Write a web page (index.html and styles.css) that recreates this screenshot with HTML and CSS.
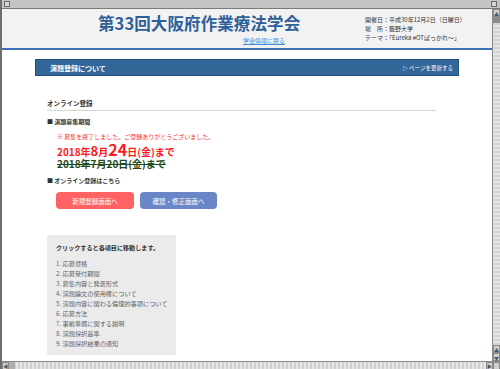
FILE: index.html
```html
<!DOCTYPE html>
<html lang="ja">

<head>
    <meta charset="UTF-8">
    <title>演題登録について</title>
    <link rel="stylesheet" href="styles.css">
</head>

<body>
    <div class="window">
        <div class="titlebar">
            <span class="win-box"></span>
            <span class="win-box"></span>
        </div>
        <div class="middle">
            <div class="viewport">
                <header class="site-header">
                    <div class="brand">
                        <h1>第33回大阪府作業療法学会</h1>
                        <a href="#" class="back-link">学会情報に戻る</a>
                    </div>
                    <div class="info">
                        <p>開催日：平成30年12月2日（日曜日）</p>
                        <p>場　所：藍野大学</p>
                        <p>テーマ：「Eureka #OTぱっかれ～」</p>
                    </div>
                </header>

                <div class="container">
                    <div class="section-bar">
                        <span class="bar-title">演題登録について</span>
                        <span class="bar-link">▷ ページを更新する</span>
                    </div>

                    <div class="content">
                        <h3 class="sub-title">オンライン登録</h3>

                        <p class="item-head">■ 演題募集期間</p>
                        <p class="notice">※ 募集を終了しました。ご登録ありがとうございました。</p>
                        <p class="deadline">2018年<span class="big">8</span>月<span class="bigger">24</span>日(金)まで</p>
                        <p class="old-deadline">2018年7月20日(金)まで</p>

                        <p class="item-head item-head-2">■ オンライン登録はこちら</p>
                        <div class="buttons">
                            <a href="#" class="btn btn-red">新規登録画面へ</a>
                            <a href="#" class="btn btn-blue">確認・修正画面へ</a>
                        </div>

                        <div class="toc">
                            <p class="toc-title">クリックすると各項目に移動します。</p>
                            <ol class="toc-list">
                                <li>1. 応募資格</li>
                                <li>2. 応募受付期間</li>
                                <li>3. 募集内容と発表形式</li>
                                <li>4. 演題論文の使用権について</li>
                                <li>5. 演題内容に関わる倫理的事項について</li>
                                <li>6. 応募方法</li>
                                <li>7. 事前準備に関する説明</li>
                                <li>8. 演題採択基準</li>
                                <li>9. 演題採択結果の通知</li>
                            </ol>
                        </div>
                    </div>
                </div>
            </div>
            <div class="vscroll">
                <span class="sb-btn">▲</span>
                <span class="sb-thumb"></span>
                <span class="sb-track"></span>
                <span class="sb-btn">▲</span>
                <span class="sb-btn">▼</span>
            </div>
        </div>
        <div class="hscroll">
            <span class="sb-btn">◀</span>
            <span class="sb-thumb-h"></span>
            <span class="sb-track"></span>
            <span class="sb-btn">▶</span>
            <span class="sb-btn sb-corner"></span>
        </div>
    </div>
</body>

</html>
```

FILE: styles.css
```css
* {
    box-sizing: border-box;
}

body {
    margin: 0;
    width: 500px;
    height: 369px;
    overflow: hidden;
    font-family: "Noto Sans CJK JP", "Liberation Sans", sans-serif;
    color: #333;
}

p,
h1,
h3 {
    margin: 0;
}

/* window frame */
.window {
    display: flex;
    flex-direction: column;
    height: 369px;
    border-left: 2px solid #6e6e6e;
    background-color: #bdbdbd;
}

.titlebar {
    height: 9px;
    display: flex;
    justify-content: space-between;
    align-items: center;
    padding: 0 3px 0 2px;
    background-color: #c4c4c4;
    border-bottom: 1px solid #7a7a7a;
}

.win-box {
    width: 6px;
    height: 6px;
    border: 1px solid #6a6a6a;
    background-color: #d6d6d6;
}

.middle {
    flex: 1;
    display: flex;
    min-height: 0;
}

.viewport {
    flex: 1;
    background-color: #fff;
    overflow: hidden;
}

.vscroll {
    width: 8px;
    display: flex;
    flex-direction: column;
    background: repeating-linear-gradient(0deg, #d2d2d2 0 2px, #e6e6e6 2px 4px);
    border-left: 1px solid #8a8a8a;
}

.sb-btn {
    height: 8px;
    min-width: 7px;
    font-size: 5px;
    line-height: 8px;
    text-align: center;
    color: #555;
    background-color: #cfcfcf;
    border: 1px solid #8a8a8a;
}

.sb-thumb {
    height: 6px;
    background-color: #8c8c8c;
}

.sb-track {
    flex: 1;
}

.hscroll {
    height: 8px;
    display: flex;
    background: repeating-linear-gradient(90deg, #d2d2d2 0 2px, #e6e6e6 2px 4px);
    border-top: 1px solid #8a8a8a;
}

.hscroll .sb-btn {
    width: 7px;
    height: 8px;
    line-height: 6px;
}

.sb-thumb-h {
    width: 6px;
    background-color: #b0b0b0;
}

.sb-corner {
    width: 8px;
}

/* header */
.site-header {
    display: flex;
    height: 41px;
    background-color: #f2f2f2;
    border-bottom: 2px solid #3d6fb4;
}

.brand {
    width: 267px;
    margin-left: 96px;
    padding-top: 5px;
}

.brand h1 {
    font-size: 16.5px;
    line-height: 19px;
    font-weight: bold;
    color: #2f5f98;
    letter-spacing: 0.1px;
}

.back-link {
    display: block;
    margin: 4px 0 0 145px;
    font-size: 6px;
    line-height: 8px;
    color: #3c8ee0;
}

.info {
    padding-top: 6px;
    font-size: 6px;
    line-height: 9px;
    color: #333;
}

/* main */
.container {
    width: 424px;
    margin: 9px auto 0;
}

.section-bar {
    display: flex;
    justify-content: space-between;
    align-items: center;
    height: 17px;
    padding: 0 5px 0 14px;
    background-color: #336699;
    border: 1px solid #24507e;
    color: #fff;
}

.bar-title {
    font-size: 7px;
    font-weight: bold;
}

.bar-link {
    font-size: 5.5px;
}

.content {
    padding-left: 12px;
}

.sub-title {
    width: 389px;
    margin-top: 22px;
    padding-bottom: 2px;
    font-size: 6.5px;
    line-height: 10px;
    border-bottom: 1px solid #d6d6d6;
}

.item-head {
    margin-top: 6px;
    font-size: 6px;
    line-height: 10px;
    font-weight: bold;
}

.item-head-2 {
    margin-top: 7px;
}

.notice {
    margin: 5px 0 0 10px;
    font-size: 6px;
    line-height: 10px;
    color: #ff3030;
}

.deadline {
    margin: 2px 0 0 10px;
    font-size: 10px;
    line-height: 12px;
    font-weight: bold;
    color: #ff1a1a;
}

.deadline .big {
    font-size: 13px;
    line-height: 10px;
}

.deadline .bigger {
    font-size: 16px;
    line-height: 10px;
}

.old-deadline {
    margin-left: 10px;
    font-size: 10px;
    line-height: 11px;
    font-weight: bold;
    color: #1e4a22;
    text-decoration: line-through;
}

.buttons {
    display: flex;
    gap: 6px;
    margin: 6px 0 0 9px;
}

.btn {
    display: flex;
    align-items: center;
    justify-content: center;
    width: 78px;
    height: 17px;
    border-radius: 4px;
    font-size: 6.5px;
    color: #fff;
    text-decoration: none;
}

.btn-red {
    background-color: #ff6262;
}

.btn-blue {
    width: 77px;
    background-color: #6a86c6;
}

.toc {
    width: 129px;
    height: 120px;
    margin-top: 26px;
    padding: 8px 0 0 9px;
    background-color: #ebebeb;
}

.toc-title {
    font-size: 6.1px;
    line-height: 10px;
    font-weight: bold;
}

.toc-list {
    list-style: none;
    margin: 6px 0 0;
    padding: 0;
}

.toc-list li {
    font-size: 6.2px;
    line-height: 10px;
    color: #666;
}
```
